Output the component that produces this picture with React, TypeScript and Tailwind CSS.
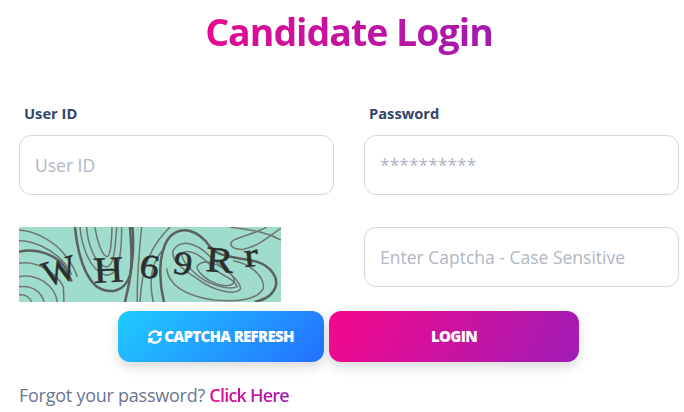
import React from "react";

const font = "font-['Open_Sans',sans-serif]";

function Captcha() {
  const thin = [
    "M57 30 C100 32 160 60 195 105 C215 130 225 150 232 170",
    "M57 62 C100 62 150 85 185 120 C200 135 210 150 215 165",
    "M57 130 C110 120 170 160 190 200 L192 246",
    "M57 170 C110 160 165 195 172 246",
    "M57 200 C95 195 125 215 132 246",
    "M57 225 C75 222 90 232 95 246",
    "M260 21 C262 70 285 130 315 140 C340 145 345 100 350 21",
    "M240 21 C245 80 270 150 315 165 C350 170 365 130 365 21",
    "M285 21 C290 60 305 105 320 110 C333 110 335 60 336 21",
    "M425 21 C418 90 410 170 412 246",
    "M420 246 C425 160 440 90 510 21",
    "M460 246 C445 180 455 120 495 85",
    "M520 90 C545 55 590 70 625 105 C660 140 715 170 722 205 C715 225 650 220 590 175 C550 150 510 120 520 90",
    "M590 140 C610 115 650 125 695 165 C715 190 695 205 650 192 C620 180 595 160 590 140",
    "M500 145 C505 190 545 225 640 240 C700 245 770 245 790 205 C795 170 750 130 700 122",
    "M545 100 C565 85 600 100 640 145 C680 175 700 175 712 200 C690 212 620 195 580 155 C560 135 545 120 545 100",
    "M843 25 C810 45 780 78 730 88 C695 90 680 70 705 58 C740 45 790 30 800 21",
    "M690 21 C740 30 790 30 843 60",
  ];
  const thick = [
    "M57 95 C110 82 175 105 200 150 C205 165 212 175 215 185",
    "M225 21 C232 90 250 165 290 200 C330 225 375 215 390 165 C400 120 392 60 390 21",
    "M397 21 C405 90 392 180 375 246",
    "M492 246 C475 180 475 90 510 50 C545 15 595 30 630 80 C660 115 710 110 770 125 C815 140 838 175 825 205 C810 235 785 240 765 246",
  ];
  return (
    <svg viewBox="0 0 262 75" className="block h-[75px] w-[262px] shrink-0 bg-[#a0dccb]">
      <g transform="translate(-19 -7) scale(0.3333)" fill="none">
        <g stroke="#6d7674" strokeWidth="4.5">
          {thin.map((d) => (
            <path key={d} d={d} />
          ))}
        </g>
        <g stroke="#5b6160" strokeWidth="7.5">
          {thick.map((d) => (
            <path key={d} d={d} />
          ))}
        </g>
      </g>
      <g fill="#2a2e2d" stroke="#2a2e2d" strokeWidth="0.5" fontFamily="'Liberation Serif',serif">
        <text fontSize="36" transform="translate(27 60) rotate(-16)">W</text>
        <text fontSize="37" transform="translate(75 56) rotate(-3) scale(1.12 1)">H</text>
        <text fontSize="34" transform="translate(119 49) rotate(10) scale(1.15 1)">6</text>
        <text fontSize="33" transform="translate(153 46) rotate(8) scale(1.15 1)">9</text>
        <text fontSize="36" transform="translate(186 44) rotate(4) scale(1.15 1)">R</text>
        <text fontSize="34" transform="translate(226 40) rotate(-6) scale(1.25 1)">r</text>
      </g>
    </svg>
  );
}

function Field({ label, placeholder }: { label?: string; placeholder: string }) {
  return (
    <div className="w-[315px]">
      {label && (
        <label className="mb-[11px] block h-[21px] pl-[5px] text-[14.7px] font-bold leading-[21px] text-[#32466b]">
          {label}
        </label>
      )}
      <input
        placeholder={placeholder}
        className="block h-[60px] w-[315px] rounded-[12px] border border-[#d4d7db] bg-white px-[15px] text-[17.5px] outline-none placeholder:text-[#b0b7c2]"
      />
    </div>
  );
}

export default function App() {
  const pink = "bg-[linear-gradient(100deg,#e6098f,#a21caf_100%)]";
  return (
    <div className={`${font} h-[412px] w-[684px] overflow-hidden bg-white pl-[19px]`}>
      <h1 className="w-[660px] pt-[7px] text-center text-[37.5px] font-bold leading-[50px] tracking-[-1px]">
        <span className={`${pink} bg-clip-text text-transparent`}>Candidate Login</span>
      </h1>
      <div className="mt-[46px] flex w-[660px] gap-[30px]">
        <Field label="User ID" placeholder="User ID" />
        <Field label="Password" placeholder="**********" />
      </div>
      <div className="mt-[32px] flex w-[660px] gap-[83px]">
        <Captcha />
        <Field placeholder="Enter Captcha - Case Sensitive" />
      </div>
      <div className="mt-[9px] flex gap-[5px] pl-[99px]">
        <button className="flex h-[51px] w-[206px] items-center justify-center gap-[2px] rounded-[12px] bg-[linear-gradient(135deg,#20cbff,#2470ff)] text-[15px] font-extrabold tracking-[-0.7px] text-white shadow-[0_5px_12px_rgba(0,0,0,0.15)]">
          <svg viewBox="0 0 512 512" className="h-[14px] w-[14px] fill-white">
            <path d="M370.7 133.3C339.5 104 298.9 88 255.8 88c-77.5.1-144.3 53.2-162.8 126.9-1.3 5.4-6.1 9.2-11.7 9.2H24.1c-7.5 0-13.2-6.8-11.8-14.2C33.9 94.9 134.8 8 256 8c66.4 0 126.8 26.1 171.3 68.7L463 41c15.1-15.1 41-4.4 41 17v134c0 13.3-10.7 24-24 24H346c-21.4 0-32.1-25.9-17-41l41.7-41.7zM32 296h134c21.4 0 32.1 25.9 17 41l-41.8 41.8c31.3 29.3 71.8 45.3 114.9 45.2 77.4-.1 144.3-53.1 162.8-126.9 1.3-5.4 6.1-9.2 11.7-9.2h57.3c7.5 0 13.2 6.8 11.8 14.2C478.1 417.1 377.2 504 256 504c-66.4 0-126.8-26.1-171.3-68.7L49 471c-15.1 15.1-41 4.4-41-17V320c0-13.3 10.7-24 24-24z" />
          </svg>
          CAPTCHA REFRESH
        </button>
        <button className="h-[51px] w-[250px] rounded-[12px] bg-[linear-gradient(120deg,#f5088b,#9f1cb5)] text-[15px] font-extrabold tracking-[-0.7px] text-white shadow-[0_5px_12px_rgba(0,0,0,0.15)]">
          LOGIN
        </button>
      </div>
      <p className="mt-[20px] text-[18px] leading-[26px] tracking-[-0.25px] text-[#6b7690]">
        Forgot your password?{" "}
        <a className={`${pink} bg-clip-text font-semibold tracking-[-0.8px] text-transparent`}>Click Here</a>
      </p>
    </div>
  );
}
